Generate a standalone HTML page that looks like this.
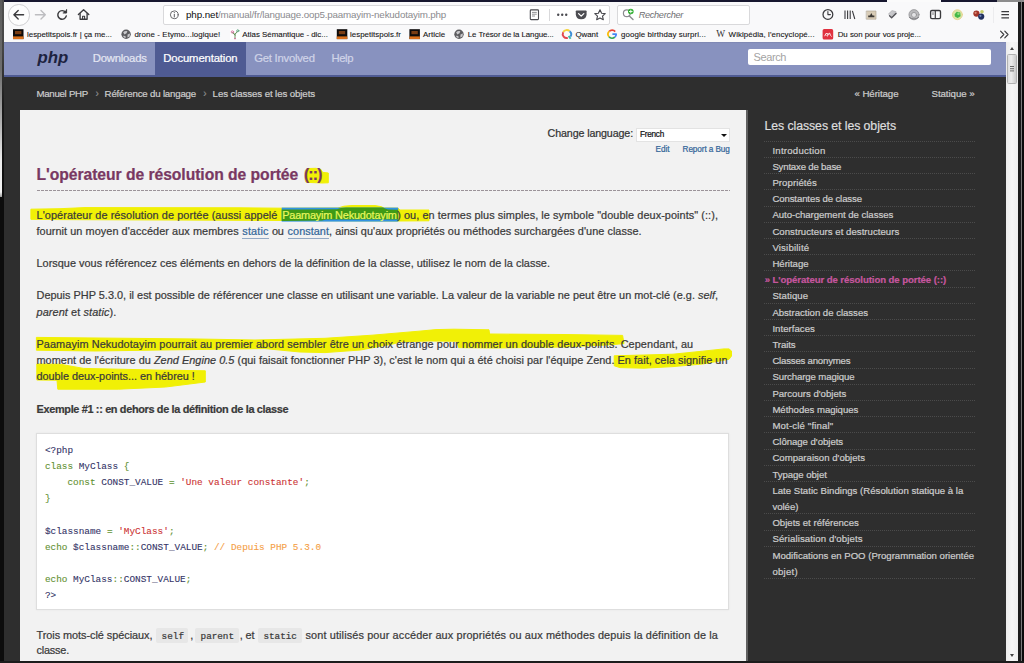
<!DOCTYPE html>
<html lang="fr">
<head>
<meta charset="utf-8">
<title>PHP: L'opérateur de résolution de portée (::) - Manual</title>
<style>
html,body{margin:0;padding:0;}
body{width:1024px;height:663px;overflow:hidden;position:relative;background:#2e2e2e;font-family:"Liberation Sans",sans-serif;}
.a{position:absolute;}
.t{position:absolute;white-space:nowrap;-webkit-text-stroke:0.22px currentColor;}
.sd{position:absolute;left:764px;width:211px;height:0;border-top:1px dotted #4b4b4b;z-index:2;}
svg{position:absolute;overflow:visible;}
</style>
</head>
<body>
<!-- window frame -->
<div class="a" style="left:0;top:0;width:1024px;height:1.6px;background:#17172f;"></div>
<div class="a" style="left:887px;top:0;width:54.2px;height:1.6px;background:#fbfbfb;"></div>
<div class="a" style="left:996.7px;top:0;width:27.3px;height:1.6px;background:#8c8c8c;"></div>
<!-- browser chrome -->
<div class="a" style="left:4.3px;top:1.6px;width:1014px;height:41px;background:#f9f9fa;"></div>
<div class="a" style="left:8.2px;top:4.2px;width:19.4px;height:19.4px;border:1px solid #cfcfd1;border-radius:50%;background:#fdfdfd;"></div>
<div class="a" style="left:163px;top:5.2px;width:445.4px;height:17.4px;border:1px solid #d9d9db;border-radius:2px;background:#fff;"></div>
<div class="a" style="left:617px;top:5.2px;width:131px;height:17.4px;border:1px solid #d9d9db;border-radius:2px;background:#fff;"></div>
<div class="a" style="left:549px;top:9px;width:1px;height:12px;background:#d9d9db;"></div>
<div class="a" style="left:992.5px;top:7px;width:1px;height:16px;background:#ececee;"></div>
<svg width="1024" height="44" viewBox="0 0 1024 44" style="left:0;top:0;z-index:4;" fill="none" stroke-linecap="round" stroke-linejoin="round">
<!-- back / forward -->
<g stroke="#3b3b3e" stroke-width="1.35">
<path d="M14 14.7H23.6M18.2 10.4L13.9 14.7L18.2 19"/>
</g>
<g stroke="#bdbdc0" stroke-width="1.35">
<path d="M35.4 14.7H45.2M41 10.4L45.3 14.7L41 19"/>
</g>
<!-- reload -->
<g stroke="#3b3b3e" stroke-width="1.45">
<path d="M65.6 12.4A4.3 4.3 0 1 0 66.3 15.9"/>
<path d="M66.6 9.6V13H63.2" fill="#3b3b3e" stroke-width="1"/>
</g>
<!-- home -->
<g stroke="#3b3b3e" stroke-width="1.35">
<path d="M78.4 14.6L83.6 9.7L88.8 14.6"/>
<path d="M80.1 13.6V19.2H87.1V13.6"/>
<path d="M82.6 19V16.2H84.6V19" stroke-width="1.1"/>
</g>
<!-- info -->
<circle cx="174.3" cy="14.8" r="3.9" stroke="#5a5a5e" stroke-width="0.9"/>
<path d="M174.3 14.3V17" stroke="#5a5a5e" stroke-width="1"/>
<circle cx="174.3" cy="12.6" r="0.55" fill="#5a5a5e"/>
<!-- reader -->
<rect x="530.3" y="9.9" width="8.2" height="9.7" rx="0.8" stroke="#4a4a4f" stroke-width="1.1"/>
<path d="M532.4 12.4H536.4M532.4 14.2H536.4M532.4 16H534.6" stroke="#77777b" stroke-width="0.8"/>
<!-- dots -->
<g fill="#4a4a4f"><circle cx="558.2" cy="14.7" r="1.2"/><circle cx="562.2" cy="14.7" r="1.2"/><circle cx="566.2" cy="14.7" r="1.2"/></g>
<!-- pocket -->
<path d="M576.6 10.4H585.8Q586.6 10.4 586.6 11.3V14.2Q586.6 19.2 581.2 19.3Q575.8 19.2 575.8 14.2V11.3Q575.8 10.4 576.6 10.4Z" fill="#4d4d52"/>
<path d="M578.6 13.6L581.2 16.1L583.8 13.6" stroke="#fff" stroke-width="1.3"/>
<!-- star -->
<path d="M600 9.8L601.6 13.2L605.2 13.6L602.5 16.1L603.3 19.7L600 17.9L596.7 19.7L597.5 16.1L594.8 13.6L598.4 13.2Z" stroke="#4a4a4f" stroke-width="1.15"/>
<!-- search magnifier -->
<circle cx="626.8" cy="13.3" r="3.4" stroke="#8b8b8f" stroke-width="1.2"/>
<path d="M629.3 15.9L633 19.4" stroke="#8b8b8f" stroke-width="1.4"/>
<circle cx="630.8" cy="11.5" r="2.8" fill="#2fae2f"/>
<path d="M629.4 11.5H632.2M630.8 10.1V12.9" stroke="#fff" stroke-width="0.9"/>
<!-- clock -->
<circle cx="827.9" cy="14.4" r="4.9" stroke="#3b3b3e" stroke-width="1.25"/>
<path d="M827.9 11.6V14.6H830.4" stroke="#3b3b3e" stroke-width="1.1"/>
<!-- library -->
<path d="M845 10.4V19M847.6 10.4V19M850.2 10.4V19M852.4 10.9L854.8 19" stroke="#3b3b3e" stroke-width="1.1" stroke-linecap="butt"/>
<!-- image icon -->
<rect x="866.6" y="11" width="9.4" height="8.2" fill="#d9cdb8" stroke="#a99f8e" stroke-width="0.6"/>
<path d="M868.2 17.2H874.4V15.6L872.6 15.6L871.3 13L870 15.6H868.2Z" fill="#3d3a36"/>
<!-- pen / check -->
<path d="M888.6 13.8L892 10.6L896 11.6L892.2 15.4Z" fill="#c9c9cc" stroke="#9a9a9e" stroke-width="0.5"/>
<path d="M889.6 15.8L891.6 17.8L896 13.4" stroke="#55555a" stroke-width="1.5"/>
<!-- gray gear/globe -->
<circle cx="914" cy="14.7" r="5.1" fill="#b9b9bb" stroke="#8e8e91" stroke-width="0.7"/>
<circle cx="914" cy="14.9" r="2.5" fill="#e3e3e5" stroke="#8a8a8d" stroke-width="0.7"/>
<path d="M909.5 17.6Q914 20.6 918.5 17.6" stroke="#7c7c80" stroke-width="1"/>
<!-- sidebar icon -->
<rect x="930.6" y="10.5" width="9.9" height="8.1" rx="1.3" stroke="#3b3b3e" stroke-width="1.35"/>
<path d="M935.3 10.6V18.5" stroke="#3b3b3e" stroke-width="1.2"/>
<path d="M933 12.6V14.6" stroke="#3b3b3e" stroke-width="0.7"/>
<!-- green icon -->
<circle cx="957.4" cy="14.7" r="5" fill="#dbe7a8" stroke="#e7cf8c" stroke-width="0.8"/>
<path d="M954.6 14.2L956.8 11.8L960.2 12.6L960.6 16.2L957.6 18L954.9 16.6Z" fill="#45b848"/>
<circle cx="958.4" cy="13.8" r="1.2" fill="#8ddc7a"/>
<!-- balls -->
<circle cx="982" cy="11.8" r="1.8" fill="#c9cf6a"/>
<circle cx="976.4" cy="13.6" r="3.1" fill="#a3352a"/>
<circle cx="975.6" cy="12.8" r="1.1" fill="#d88a74"/>
<circle cx="981.2" cy="16.6" r="3.1" fill="#22305f"/>
<circle cx="980.4" cy="15.8" r="1.1" fill="#6f86b8"/>
<!-- hamburger -->
<path d="M1001.4 11.6H1009M1001.4 14.7H1009M1001.4 17.8H1009" stroke="#3b3b3e" stroke-width="1.3" stroke-linecap="butt"/>
<!-- overflow chevrons -->
<path d="M1000.6 31.2L1003.8 34.5L1000.6 37.8M1004.8 31.2L1008 34.5L1004.8 37.8" stroke="#3b3b3e" stroke-width="1.2"/>

<!-- bookmark favicons -->
<g>
<rect x="13" y="29.2" width="10.5" height="9.9" fill="#0d0b0a"/><rect x="13" y="36.4" width="10.5" height="2.7" fill="#d96f1a"/><rect x="15" y="31" width="6.4" height="3.2" fill="#7a3d12"/>
<rect x="336.8" y="29.2" width="10.5" height="9.9" fill="#0d0b0a"/><rect x="336.8" y="36.4" width="10.5" height="2.7" fill="#d96f1a"/><rect x="338.8" y="31" width="6.4" height="3.2" fill="#7a3d12"/>
<rect x="409.4" y="29.2" width="10.5" height="9.9" fill="#0d0b0a"/><rect x="409.4" y="36.4" width="10.5" height="2.7" fill="#d96f1a"/><rect x="411.4" y="31" width="6.4" height="3.2" fill="#7a3d12"/>
</g>
<!-- globes -->
<g>
<circle cx="126.1" cy="34.3" r="4.7" fill="#5d5d60"/>
<path d="M123.2 32.2Q125 30.6 127.4 31.2L126.6 33.2L124.4 34.6Z M127.6 34.4L130 33.6L129.6 36.6L127.4 37.6Z M123 35.8L125.4 36L125.8 38L123.8 37.4Z" fill="#c9c9cc"/>
<circle cx="459" cy="34.3" r="4.7" fill="#5d5d60"/>
<path d="M456.1 32.2Q457.9 30.6 460.3 31.2L459.5 33.2L457.3 34.6Z M460.5 34.4L462.9 33.6L462.5 36.6L460.3 37.6Z M455.9 35.8L458.3 36L458.7 38L456.7 37.4Z" fill="#c9c9cc"/>
</g>
<!-- atlas icon -->
<rect x="230" y="29.4" width="10" height="10" fill="#fff"/>
<path d="M235 38.6V33.6M235 35.2L232.6 32.4M235 34.4L237.6 31" stroke="#5b8a4e" stroke-width="0.9"/>
<circle cx="232.4" cy="32" r="1.2" stroke="#d66a9a" stroke-width="0.8"/>
<circle cx="237.8" cy="30.8" r="1.1" stroke="#58a07a" stroke-width="0.8"/>
<circle cx="235" cy="38.6" r="0.8" fill="#d66a9a"/>
<!-- qwant -->
<g stroke-width="1.9" stroke-linecap="butt">
<path d="M563.2 32.2A4 4 0 0 1 569.6 31.2" stroke="#f4d33c"/>
<path d="M569.6 31.2A4 4 0 0 1 570.4 36.6" stroke="#3d8fd6"/>
<path d="M567.8 37.9A4 4 0 0 1 563.2 32.2" stroke="#e2474e"/>
<path d="M568.6 36L570.6 38.8" stroke="#39b6a5"/>
</g>
<!-- google G -->
<g stroke-width="1.7" stroke-linecap="butt">
<path d="M615.2 31.6A4 4 0 0 0 609.2 31.4" stroke="#e94335"/>
<path d="M609.2 31.4A4 4 0 0 0 609 36.8" stroke="#fbbc05"/>
<path d="M609 36.8A4 4 0 0 0 614.8 37.2" stroke="#34a853"/>
<path d="M614.8 37.2A4 4 0 0 0 616.2 34.2H612.4" stroke="#4285f4"/>
</g>
<!-- red favicon -->
<rect x="822.6" y="29.1" width="10.6" height="10.4" rx="1.6" fill="#e0313f"/>
<path d="M824.8 35.8Q825.6 32.2 827.6 33.6Q829.4 35.2 827.4 36Q825.8 36.4 828.8 33.4Q830.2 32.4 830.2 35L831.4 36.2" stroke="#fff" stroke-width="0.9"/>
</svg>

<!-- php navbar -->
<div class="a" style="left:4px;top:42.3px;width:1002.2px;height:32.3px;background:linear-gradient(180deg,#7c85b0 0,#8892bf 1.6px);border-bottom:2.8px solid #4f5b93;"></div>
<div class="a" style="left:155px;top:42.3px;width:90.6px;height:35.1px;background:#4f5b93;"></div>
<div class="a" style="left:748px;top:49px;width:243px;height:16px;background:#fff;border-radius:2px;"></div>
<!-- layout -->
<div class="a" style="left:19.6px;top:109.7px;width:726.1px;height:551.3px;background:#f2f2f2;border-right:2px solid #606060;"></div>
<div class="a" style="left:636px;top:128.4px;width:91.7px;height:11.5px;background:#fff;border:1px solid #e3e3e3;"></div>
<div class="a" style="left:720.5px;top:133.6px;width:0;height:0;border-left:3px solid transparent;border-right:3px solid transparent;border-top:3.2px solid #111;"></div>
<div class="a" style="left:36.5px;top:189.8px;width:693.2px;height:1px;background:repeating-linear-gradient(90deg,#9b9399 0,#9b9399 2.8px,rgba(0,0,0,0) 2.8px,rgba(0,0,0,0) 4px);z-index:2;"></div>
<div class="a" style="left:36.1px;top:432.9px;width:690.6px;height:175px;background:#fff;border:1px solid #dedede;box-shadow:0 0 2px rgba(0,0,0,0.06);"></div>
<div class="a" style="left:156.4px;top:628.3px;width:32px;height:14.5px;background:#e7e7e7;border-radius:2px;"></div>
<div class="a" style="left:195.4px;top:628.3px;width:43.3px;height:14.5px;background:#e7e7e7;border-radius:2px;"></div>
<div class="a" style="left:258.4px;top:628.3px;width:43.5px;height:14.5px;background:#e7e7e7;border-radius:2px;"></div>
<!--HILITE-START-->
<svg width="1024" height="663" viewBox="0 0 1024 663" style="left:0;top:0;z-index:1;">
<polygon points="305.2,170.5 308.0,168.5 316.0,168.3 321.0,169.5 322.5,172.3 328.3,173.0 328.3,182.8 322.0,183.0 306.0,182.3 305.2,180.0" fill="#f1f006" stroke="#f1f006" stroke-width="1" stroke-linejoin="round" />
<polygon points="30.9,209.2 60.0,208.7 85.0,207.6 240.0,207.8 281.7,208.2 338.0,208.0 344.0,206.2 352.0,205.5 375.0,205.6 381.0,206.6 384.0,208.0 398.0,208.2 400.0,210.0 429.0,210.0 429.0,220.8 398.0,221.0 240.0,220.3 60.0,219.6 30.9,219.3" fill="#f1f006" stroke="#f1f006" stroke-width="1" stroke-linejoin="round" />
<rect x="281.7" y="207.6" width="116.5" height="14" fill="#3393e2"/>
<polygon points="281.7,209.5 300.0,209.4 337.0,209.3 341.0,208.0 346.0,207.5 383.0,207.5 385.0,208.4 388.0,209.6 398.2,209.8 398.2,219.5 326.0,219.4 322.0,220.6 281.7,221.0" fill="#3f9a16"/>
<polygon points="36.4,337.4 198.0,339.0 255.0,340.0 325.0,338.3 372.0,335.2 419.0,331.2 436.0,329.6 454.0,329.2 489.0,329.8 489.6,334.0 564.0,334.5 622.6,335.4 624.0,343.6 611.0,344.8 564.0,347.0 493.7,348.0 458.6,347.6 457.0,341.3 430.0,341.0 400.0,341.8 395.6,343.4 360.5,350.0 325.0,352.6 300.0,352.0 265.0,348.6 189.0,349.6 95.0,351.0 36.4,350.2" fill="#f1f006" stroke="#f1f006" stroke-width="1" stroke-linejoin="round" />
<polygon points="614.2,355.8 644.0,355.0 673.0,354.2 702.5,351.2 724.0,348.9 729.0,348.9 731.5,351.0 731.5,356.0 729.0,359.3 702.5,364.0 673.0,366.6 644.0,368.2 620.0,367.6 614.2,365.8" fill="#f1f006" stroke="#f1f006" stroke-width="1" stroke-linejoin="round" />
<polygon points="36.8,364.0 60.0,364.2 83.6,368.4 154.0,370.0 205.3,370.8 205.3,382.0 165.6,387.0 118.7,389.2 57.8,389.2 57.0,380.2 36.8,380.0" fill="#f1f006" stroke="#f1f006" stroke-width="1" stroke-linejoin="round" />
</svg>
<!--HILITE-END-->
<!-- scrollbar + frame -->
<div class="a" style="left:1006.2px;top:42.3px;width:12px;height:618.7px;background:linear-gradient(90deg,#ececec,#f7f7f7 50%,#efefef);"></div>
<div class="a" style="left:1007.4px;top:54px;width:9.3px;height:30.3px;background:linear-gradient(90deg,#dedede,#ededed 40%,#cbcbcb);border:1px solid #b2b2b2;box-sizing:border-box;border-radius:1.5px;"></div>
<div class="a" style="left:1009.8px;top:66.3px;width:4.2px;height:1px;background:#6a6a6a;box-shadow:0 2.2px 0 #6a6a6a,0 4.4px 0 #6a6a6a;"></div>
<div class="a" style="left:1010px;top:47px;width:0;height:0;border-left:2.5px solid transparent;border-right:2.5px solid transparent;border-bottom:3px solid #444;"></div>
<div class="a" style="left:1010px;top:654.3px;width:0;height:0;border-left:2.5px solid transparent;border-right:2.5px solid transparent;border-top:3px solid #444;"></div>
<div class="a" style="left:0;top:0;width:4.3px;height:663px;background:linear-gradient(180deg,#4e4e4e 0,#454545 50px,#1a1a1a 105px,#0c0c0c 200px,#0c0c0c 100%);"></div>
<div class="a" style="left:0;top:0;width:1.6px;height:197px;background:linear-gradient(180deg,#5a5a5a 0,#6e6e6e 70px,#b5b5b5 125px,#ececec 160px,#f2f2f2 192px,#999 197px);"></div>
<div class="a" style="left:1018.2px;top:2px;width:5.8px;height:661px;background:linear-gradient(90deg,#1c1c1c 0,#1c1c1c 2.6px,#7a7a7a 2.9px,#7a7a7a 3.7px,#0a0a0a 4px,#0a0a0a 100%);"></div>
<div class="a" style="left:0;top:661px;width:1024px;height:2px;background:#1c1c1c;"></div>
<div class="sd" style="top:140.8px"></div>
<div class="sd" style="top:157.0px"></div>
<div class="sd" style="top:173.2px"></div>
<div class="sd" style="top:189.4px"></div>
<div class="sd" style="top:205.6px"></div>
<div class="sd" style="top:221.8px"></div>
<div class="sd" style="top:238.0px"></div>
<div class="sd" style="top:254.2px"></div>
<div class="sd" style="top:270.4px"></div>
<div class="sd" style="top:286.6px"></div>
<div class="sd" style="top:302.8px"></div>
<div class="sd" style="top:319.0px"></div>
<div class="sd" style="top:335.2px"></div>
<div class="sd" style="top:351.4px"></div>
<div class="sd" style="top:367.6px"></div>
<div class="sd" style="top:383.8px"></div>
<div class="sd" style="top:400.0px"></div>
<div class="sd" style="top:416.2px"></div>
<div class="sd" style="top:432.4px"></div>
<div class="sd" style="top:448.6px"></div>
<div class="sd" style="top:464.8px"></div>
<div class="sd" style="top:481.0px"></div>
<div class="sd" style="top:513.4px"></div>
<div class="sd" style="top:529.6px"></div>
<div class="sd" style="top:545.8px"></div>
<div class="sd" style="top:578.2px"></div>
<div class="t" id="t0" style='left:186.00px;top:9.23px;font:normal normal 9.80px/12.74px "Liberation Sans", sans-serif;color:#0c0c0d;z-index:3;letter-spacing:-0.098px;-webkit-text-stroke:0;'>php.net</div>
<div class="t" id="t1" style='left:218.00px;top:9.23px;font:normal normal 9.80px/12.74px "Liberation Sans", sans-serif;color:#8a8a8e;z-index:3;letter-spacing:-0.182px;-webkit-text-stroke:0;'>/manual/fr/language.oop5.paamayim-nekudotayim.php</div>
<div class="t" id="t2" style='left:638.70px;top:10.02px;font:italic normal 9.20px/11.96px "Liberation Sans", sans-serif;color:#6f6f73;z-index:3;letter-spacing:-0.320px;-webkit-text-stroke:0;'>Rechercher</div>
<div class="t" id="t3" style='left:716.20px;top:28.19px;font:normal normal 9.40px/12.22px "Liberation Serif", serif;color:#333;z-index:3;letter-spacing:-0.259px;-webkit-text-stroke:0;'>W</div>
<div class="t" id="t4" style='left:27.00px;top:29.66px;font:normal normal 7.90px/10.27px "Liberation Sans", sans-serif;color:#151515;z-index:3;letter-spacing:0.002px;-webkit-text-stroke:0.1px;'>lespetitspois.fr | ça me...</div>
<div class="t" id="t5" style='left:134.40px;top:29.66px;font:normal normal 7.90px/10.27px "Liberation Sans", sans-serif;color:#151515;z-index:3;letter-spacing:0.088px;-webkit-text-stroke:0.1px;'>drone - Etymo...logique!</div>
<div class="t" id="t6" style='left:242.30px;top:29.66px;font:normal normal 7.90px/10.27px "Liberation Sans", sans-serif;color:#151515;z-index:3;letter-spacing:0.003px;-webkit-text-stroke:0.1px;'>Atlas Sémantique - dic...</div>
<div class="t" id="t7" style='left:350.00px;top:29.66px;font:normal normal 7.90px/10.27px "Liberation Sans", sans-serif;color:#151515;z-index:3;letter-spacing:0.035px;-webkit-text-stroke:0.1px;'>lespetitspois.fr</div>
<div class="t" id="t8" style='left:423.00px;top:29.66px;font:normal normal 7.90px/10.27px "Liberation Sans", sans-serif;color:#151515;z-index:3;letter-spacing:0.052px;-webkit-text-stroke:0.1px;'>Article</div>
<div class="t" id="t9" style='left:467.80px;top:29.66px;font:normal normal 7.90px/10.27px "Liberation Sans", sans-serif;color:#151515;z-index:3;letter-spacing:-0.073px;-webkit-text-stroke:0.1px;'>Le Trésor de la Langue...</div>
<div class="t" id="t10" style='left:575.40px;top:29.66px;font:normal normal 7.90px/10.27px "Liberation Sans", sans-serif;color:#151515;z-index:3;letter-spacing:-0.002px;-webkit-text-stroke:0.1px;'>Qwant</div>
<div class="t" id="t11" style='left:621.00px;top:29.66px;font:normal normal 7.90px/10.27px "Liberation Sans", sans-serif;color:#151515;z-index:3;letter-spacing:0.101px;-webkit-text-stroke:0.1px;'>google birthday surpri...</div>
<div class="t" id="t12" style='left:728.60px;top:29.66px;font:normal normal 7.90px/10.27px "Liberation Sans", sans-serif;color:#151515;z-index:3;letter-spacing:0.085px;-webkit-text-stroke:0.1px;'>Wikipédia, l'encyclopé...</div>
<div class="t" id="t13" style='left:837.70px;top:29.66px;font:normal normal 7.90px/10.27px "Liberation Sans", sans-serif;color:#151515;z-index:3;letter-spacing:-0.020px;-webkit-text-stroke:0.1px;'>Du son pour vos proje...</div>
<div class="t" id="t14" style='left:37.40px;top:47.18px;font:italic bold 16.80px/21.84px "Liberation Sans", sans-serif;color:#1d2340;z-index:3;letter-spacing:0.078px;-webkit-text-stroke:0;'>php</div>
<div class="t" id="t15" style='left:92.80px;top:50.95px;font:normal normal 11.30px/14.69px "Liberation Sans", sans-serif;color:#e4e6f2;z-index:3;letter-spacing:-0.232px;'>Downloads</div>
<div class="t" id="t16" style='left:163.30px;top:50.95px;font:normal normal 11.30px/14.69px "Liberation Sans", sans-serif;color:#ffffff;z-index:3;letter-spacing:-0.137px;'>Documentation</div>
<div class="t" id="t17" style='left:254.20px;top:50.95px;font:normal normal 11.30px/14.69px "Liberation Sans", sans-serif;color:#d0d4e8;z-index:3;letter-spacing:-0.245px;'>Get Involved</div>
<div class="t" id="t18" style='left:331.40px;top:50.95px;font:normal normal 11.30px/14.69px "Liberation Sans", sans-serif;color:#d0d4e8;z-index:3;letter-spacing:-0.359px;'>Help</div>
<div class="t" id="t19" style='left:753.50px;top:49.65px;font:normal normal 11.00px/14.30px "Liberation Sans", sans-serif;color:#a3a3a3;z-index:3;letter-spacing:-0.393px;-webkit-text-stroke:0;'>Search</div>
<div class="t" id="t20" style='left:36.40px;top:87.79px;font:normal normal 9.70px/12.61px "Liberation Sans", sans-serif;color:#cccccc;z-index:3;letter-spacing:-0.279px;'>Manuel PHP</div>
<div class="t" id="t21" style='left:95.50px;top:86.87px;font:normal normal 10.20px/13.26px "Liberation Sans", sans-serif;color:#8a8a8a;z-index:3;'>›</div>
<div class="t" id="t22" style='left:104.60px;top:87.79px;font:normal normal 9.70px/12.61px "Liberation Sans", sans-serif;color:#cccccc;z-index:3;letter-spacing:-0.197px;'>Référence du langage</div>
<div class="t" id="t23" style='left:203.30px;top:86.87px;font:normal normal 10.20px/13.26px "Liberation Sans", sans-serif;color:#8a8a8a;z-index:3;'>›</div>
<div class="t" id="t24" style='left:212.60px;top:87.79px;font:normal normal 9.70px/12.61px "Liberation Sans", sans-serif;color:#cccccc;z-index:3;letter-spacing:-0.105px;'>Les classes et les objets</div>
<div class="t" id="t25" style='left:854.50px;top:87.79px;font:normal normal 9.70px/12.61px "Liberation Sans", sans-serif;color:#cccccc;z-index:3;letter-spacing:-0.070px;'>« Héritage</div>
<div class="t" id="t26" style='left:931.50px;top:87.79px;font:normal normal 9.70px/12.61px "Liberation Sans", sans-serif;color:#cccccc;z-index:3;letter-spacing:-0.064px;'>Statique »</div>
<div class="t" id="t27" style='left:547.60px;top:127.24px;font:normal normal 10.70px/13.91px "Liberation Sans", sans-serif;color:#333;z-index:3;letter-spacing:-0.122px;'>Change language:</div>
<div class="t" id="t28" style='left:640.00px;top:129.97px;font:normal normal 8.20px/10.66px "Liberation Sans", sans-serif;color:#111;z-index:3;letter-spacing:-0.247px;'>French</div>
<div class="t" id="t29" style='left:655.60px;top:145.17px;font:normal normal 8.20px/10.66px "Liberation Sans", sans-serif;color:#336699;z-index:3;letter-spacing:-0.077px;'>Edit</div>
<div class="t" id="t30" style='left:682.60px;top:145.17px;font:normal normal 8.20px/10.66px "Liberation Sans", sans-serif;color:#336699;z-index:3;letter-spacing:-0.096px;'>Report a Bug</div>
<div class="t" id="t31" style='left:36.50px;top:164.69px;font:normal bold 15.70px/20.41px "Liberation Sans", sans-serif;color:#793862;z-index:3;letter-spacing:-0.051px;'>L'opérateur de résolution de portée</div>
<div class="t" id="t32" style='left:303.90px;top:164.69px;font:normal bold 15.70px/20.41px "Liberation Sans", sans-serif;color:#793862;z-index:3;letter-spacing:-0.802px;'>(::)</div>
<div class="t" id="t33" style='left:36.50px;top:207.91px;font:normal normal 10.90px/14.17px "Liberation Sans", sans-serif;color:#3a3a3a;z-index:3;letter-spacing:0.082px;'>L'opérateur de résolution de portée (aussi appelé</div>
<div class="t" id="t34" style='left:282.20px;top:207.91px;font:normal normal 10.90px/14.17px "Liberation Sans", sans-serif;color:#e8f75e;z-index:3;letter-spacing:-0.172px;'>Paamayim Nekudotayim</div>
<div class="t" id="t35" style='left:397.20px;top:207.91px;font:normal normal 10.90px/14.17px "Liberation Sans", sans-serif;color:#3a3a3a;z-index:3;letter-spacing:0.065px;'>) ou, en termes plus simples, le symbole "double deux-points" (::),</div>
<div class="t" id="t36" style='left:36.50px;top:223.91px;font:normal normal 10.90px/14.17px "Liberation Sans", sans-serif;color:#3a3a3a;z-index:3;letter-spacing:0.057px;'>fournit un moyen d'accéder aux membres</div>
<div class="t" id="t37" style='left:242.30px;top:223.91px;font:normal normal 10.90px/14.17px "Liberation Sans", sans-serif;color:#336699;z-index:3;letter-spacing:0.146px;border-bottom:1px solid #93a9c4;'>static</div>
<div class="t" id="t38" style='left:272.10px;top:223.91px;font:normal normal 10.90px/14.17px "Liberation Sans", sans-serif;color:#3a3a3a;z-index:3;letter-spacing:-0.413px;'>ou</div>
<div class="t" id="t39" style='left:287.60px;top:223.91px;font:normal normal 10.90px/14.17px "Liberation Sans", sans-serif;color:#336699;z-index:3;letter-spacing:0.029px;border-bottom:1px solid #93a9c4;'>constant</div>
<div class="t" id="t40" style='left:329.00px;top:223.91px;font:normal normal 10.90px/14.17px "Liberation Sans", sans-serif;color:#3a3a3a;z-index:3;letter-spacing:0.043px;'>, ainsi qu'aux propriétés ou méthodes surchargées d'une classe.</div>
<div class="t" id="t41" style='left:36.50px;top:256.22px;font:normal normal 10.90px/14.17px "Liberation Sans", sans-serif;color:#3a3a3a;z-index:3;letter-spacing:0.024px;'>Lorsque vous référencez ces éléments en dehors de la définition de la classe, utilisez le nom de la classe.</div>
<div class="t" id="t42" style='left:36.50px;top:288.42px;font:normal normal 10.90px/14.17px "Liberation Sans", sans-serif;color:#3a3a3a;z-index:3;letter-spacing:0.013px;'>Depuis PHP 5.3.0, il est possible de référencer une classe en utilisant une variable. La valeur de la variable ne peut être un mot-clé (e.g. <i>self</i>,</div>
<div class="t" id="t43" style='left:36.50px;top:304.52px;font:normal normal 10.90px/14.17px "Liberation Sans", sans-serif;color:#3a3a3a;z-index:3;letter-spacing:0.094px;'><i>parent</i> et <i>static</i>).</div>
<div class="t" id="t44" style='left:36.50px;top:337.02px;font:normal normal 10.90px/14.17px "Liberation Sans", sans-serif;color:#3a3a3a;z-index:3;letter-spacing:0.081px;'>Paamayim Nekudotayim pourrait au premier abord sembler être un choix étrange pour nommer un double deux-points. Cependant, au</div>
<div class="t" id="t45" style='left:36.50px;top:353.12px;font:normal normal 10.90px/14.17px "Liberation Sans", sans-serif;color:#3a3a3a;z-index:3;letter-spacing:0.039px;'>moment de l'écriture du <i>Zend Engine 0.5</i> (qui faisait fonctionner PHP 3), c'est le nom qui a été choisi par l'équipe Zend. En fait, cela signifie un</div>
<div class="t" id="t46" style='left:36.50px;top:369.12px;font:normal normal 10.90px/14.17px "Liberation Sans", sans-serif;color:#3a3a3a;z-index:3;letter-spacing:-0.029px;'>double deux-points... en hébreu !</div>
<div class="t" id="t47" style='left:36.60px;top:401.72px;font:normal bold 10.90px/14.17px "Liberation Sans", sans-serif;color:#3a3a3a;z-index:3;letter-spacing:-0.335px;'>Exemple #1 :: en dehors de la définition de la classe</div>
<div class="t" id="t48" style='left:44.90px;top:444.89px;font:normal normal 9.40px/12.22px "Liberation Mono", monospace;color:#333366;z-index:3;letter-spacing:0.008px;white-space:pre;-webkit-text-stroke:0.1px;'><span style="color:#333366">&lt;?php</span></div>
<div class="t" id="t49" style='left:44.90px;top:461.02px;font:normal normal 9.40px/12.22px "Liberation Mono", monospace;color:#333366;z-index:3;letter-spacing:0.008px;white-space:pre;-webkit-text-stroke:0.1px;'><span style="color:#5f9030">class </span><span style="color:#333366">MyClass </span><span style="color:#5f9030">{</span></div>
<div class="t" id="t50" style='left:44.90px;top:477.15px;font:normal normal 9.40px/12.22px "Liberation Mono", monospace;color:#333366;z-index:3;letter-spacing:0.009px;white-space:pre;-webkit-text-stroke:0.1px;'><span style="color:#5f9030">    const </span><span style="color:#333366">CONST_VALUE </span><span style="color:#5f9030">= </span><span style="color:#cc3333">'Une valeur constante'</span><span style="color:#5f9030">;</span></div>
<div class="t" id="t51" style='left:44.90px;top:493.28px;font:normal normal 9.40px/12.22px "Liberation Mono", monospace;color:#333366;z-index:3;letter-spacing:-0.005px;white-space:pre;-webkit-text-stroke:0.1px;'><span style="color:#5f9030">}</span></div>
<div class="t" id="t52" style='left:44.90px;top:525.54px;font:normal normal 9.40px/12.22px "Liberation Mono", monospace;color:#333366;z-index:3;letter-spacing:0.008px;white-space:pre;-webkit-text-stroke:0.1px;'><span style="color:#333366">$classname </span><span style="color:#5f9030">= </span><span style="color:#cc3333">'MyClass'</span><span style="color:#5f9030">;</span></div>
<div class="t" id="t53" style='left:44.90px;top:541.67px;font:normal normal 9.40px/12.22px "Liberation Mono", monospace;color:#333366;z-index:3;letter-spacing:0.009px;white-space:pre;-webkit-text-stroke:0.1px;'><span style="color:#5f9030">echo </span><span style="color:#333366">$classname</span><span style="color:#5f9030">::</span><span style="color:#333366">CONST_VALUE</span><span style="color:#5f9030">; </span><span style="color:#f59e45">// Depuis PHP 5.3.0</span></div>
<div class="t" id="t54" style='left:44.90px;top:573.93px;font:normal normal 9.40px/12.22px "Liberation Mono", monospace;color:#333366;z-index:3;letter-spacing:0.008px;white-space:pre;-webkit-text-stroke:0.1px;'><span style="color:#5f9030">echo </span><span style="color:#333366">MyClass</span><span style="color:#5f9030">::</span><span style="color:#333366">CONST_VALUE</span><span style="color:#5f9030">;</span></div>
<div class="t" id="t55" style='left:44.90px;top:590.06px;font:normal normal 9.40px/12.22px "Liberation Mono", monospace;color:#333366;z-index:3;letter-spacing:0.003px;white-space:pre;-webkit-text-stroke:0.1px;'><span style="color:#333366">?&gt;</span></div>
<div class="t" id="t56" style='left:36.50px;top:627.62px;font:normal normal 10.90px/14.17px "Liberation Sans", sans-serif;color:#3a3a3a;z-index:3;letter-spacing:-0.042px;'>Trois mots-clé spéciaux,</div>
<div class="t" id="t57" style='left:161.60px;top:630.56px;font:normal normal 9.30px/12.09px "Liberation Mono", monospace;color:#3a3a3a;z-index:3;letter-spacing:0.018px;'>self</div>
<div class="t" id="t58" style='left:190.30px;top:627.62px;font:normal normal 10.90px/14.17px "Liberation Sans", sans-serif;color:#3a3a3a;z-index:3;'>,</div>
<div class="t" id="t59" style='left:200.60px;top:630.56px;font:normal normal 9.30px/12.09px "Liberation Mono", monospace;color:#3a3a3a;z-index:3;letter-spacing:-0.014px;'>parent</div>
<div class="t" id="t60" style='left:239.80px;top:627.62px;font:normal normal 10.90px/14.17px "Liberation Sans", sans-serif;color:#3a3a3a;z-index:3;letter-spacing:-0.160px;'>, et</div>
<div class="t" id="t61" style='left:263.40px;top:630.56px;font:normal normal 9.30px/12.09px "Liberation Mono", monospace;color:#3a3a3a;z-index:3;letter-spacing:0.003px;'>static</div>
<div class="t" id="t62" style='left:305.50px;top:627.62px;font:normal normal 10.90px/14.17px "Liberation Sans", sans-serif;color:#3a3a3a;z-index:3;letter-spacing:0.125px;'>sont utilisés pour accéder aux propriétés ou aux méthodes depuis la définition de la</div>
<div class="t" id="t63" style='left:36.50px;top:643.31px;font:normal normal 10.90px/14.17px "Liberation Sans", sans-serif;color:#3a3a3a;z-index:3;letter-spacing:-0.201px;'>classe.</div>
<div class="t" id="t64" style='left:764.50px;top:118.91px;font:normal normal 12.30px/15.99px "Liberation Sans", sans-serif;color:#dddddd;z-index:3;letter-spacing:-0.072px;'>Les classes et les objets</div>
<div class="t" id="t65" style='left:772.40px;top:144.56px;font:normal normal 9.60px/12.48px "Liberation Sans", sans-serif;color:#cccccc;z-index:3;letter-spacing:0.247px;'>Introduction</div>
<div class="t" id="t66" style='left:772.40px;top:160.76px;font:normal normal 9.60px/12.48px "Liberation Sans", sans-serif;color:#cccccc;z-index:3;letter-spacing:-0.179px;'>Syntaxe de base</div>
<div class="t" id="t67" style='left:772.40px;top:176.96px;font:normal normal 9.60px/12.48px "Liberation Sans", sans-serif;color:#cccccc;z-index:3;letter-spacing:0.067px;'>Propriétés</div>
<div class="t" id="t68" style='left:772.40px;top:193.16px;font:normal normal 9.60px/12.48px "Liberation Sans", sans-serif;color:#cccccc;z-index:3;letter-spacing:-0.107px;'>Constantes de classe</div>
<div class="t" id="t69" style='left:772.40px;top:209.36px;font:normal normal 9.60px/12.48px "Liberation Sans", sans-serif;color:#cccccc;z-index:3;letter-spacing:-0.027px;'>Auto-chargement de classes</div>
<div class="t" id="t70" style='left:772.40px;top:225.56px;font:normal normal 9.60px/12.48px "Liberation Sans", sans-serif;color:#cccccc;z-index:3;letter-spacing:0.036px;'>Constructeurs et destructeurs</div>
<div class="t" id="t71" style='left:772.40px;top:241.76px;font:normal normal 9.60px/12.48px "Liberation Sans", sans-serif;color:#cccccc;z-index:3;letter-spacing:0.187px;'>Visibilité</div>
<div class="t" id="t72" style='left:772.40px;top:257.96px;font:normal normal 9.60px/12.48px "Liberation Sans", sans-serif;color:#cccccc;z-index:3;letter-spacing:-0.008px;'>Héritage</div>
<div class="t" id="t73" style='left:764.70px;top:274.16px;font:normal bold 9.60px/12.48px "Liberation Sans", sans-serif;color:#c6569e;z-index:3;letter-spacing:-0.074px;'>» L'opérateur de résolution de portée (::)</div>
<div class="t" id="t74" style='left:772.40px;top:290.36px;font:normal normal 9.60px/12.48px "Liberation Sans", sans-serif;color:#cccccc;z-index:3;letter-spacing:0.060px;'>Statique</div>
<div class="t" id="t75" style='left:772.40px;top:306.56px;font:normal normal 9.60px/12.48px "Liberation Sans", sans-serif;color:#cccccc;z-index:3;letter-spacing:-0.017px;'>Abstraction de classes</div>
<div class="t" id="t76" style='left:772.40px;top:322.76px;font:normal normal 9.60px/12.48px "Liberation Sans", sans-serif;color:#cccccc;z-index:3;letter-spacing:0.036px;'>Interfaces</div>
<div class="t" id="t77" style='left:772.40px;top:338.96px;font:normal normal 9.60px/12.48px "Liberation Sans", sans-serif;color:#cccccc;z-index:3;letter-spacing:-0.090px;'>Traits</div>
<div class="t" id="t78" style='left:772.40px;top:355.16px;font:normal normal 9.60px/12.48px "Liberation Sans", sans-serif;color:#cccccc;z-index:3;letter-spacing:-0.198px;'>Classes anonymes</div>
<div class="t" id="t79" style='left:772.40px;top:371.36px;font:normal normal 9.60px/12.48px "Liberation Sans", sans-serif;color:#cccccc;z-index:3;letter-spacing:-0.102px;'>Surcharge magique</div>
<div class="t" id="t80" style='left:772.40px;top:387.56px;font:normal normal 9.60px/12.48px "Liberation Sans", sans-serif;color:#cccccc;z-index:3;letter-spacing:-0.002px;'>Parcours d'objets</div>
<div class="t" id="t81" style='left:772.40px;top:403.76px;font:normal normal 9.60px/12.48px "Liberation Sans", sans-serif;color:#cccccc;z-index:3;letter-spacing:-0.030px;'>Méthodes magiques</div>
<div class="t" id="t82" style='left:772.40px;top:419.96px;font:normal normal 9.60px/12.48px "Liberation Sans", sans-serif;color:#cccccc;z-index:3;letter-spacing:0.165px;'>Mot-clé "final"</div>
<div class="t" id="t83" style='left:772.40px;top:436.16px;font:normal normal 9.60px/12.48px "Liberation Sans", sans-serif;color:#cccccc;z-index:3;letter-spacing:-0.029px;'>Clônage d'objets</div>
<div class="t" id="t84" style='left:772.40px;top:452.36px;font:normal normal 9.60px/12.48px "Liberation Sans", sans-serif;color:#cccccc;z-index:3;letter-spacing:0.010px;'>Comparaison d'objets</div>
<div class="t" id="t85" style='left:772.40px;top:468.56px;font:normal normal 9.60px/12.48px "Liberation Sans", sans-serif;color:#cccccc;z-index:3;letter-spacing:-0.038px;'>Typage objet</div>
<div class="t" id="t86" style='left:772.40px;top:484.76px;font:normal normal 9.60px/12.48px "Liberation Sans", sans-serif;color:#cccccc;z-index:3;letter-spacing:0.011px;'>Late Static Bindings (Résolution statique à la</div>
<div class="t" id="t87" style='left:772.40px;top:500.96px;font:normal normal 9.60px/12.48px "Liberation Sans", sans-serif;color:#cccccc;z-index:3;letter-spacing:-0.023px;'>volée)</div>
<div class="t" id="t88" style='left:772.40px;top:517.16px;font:normal normal 9.60px/12.48px "Liberation Sans", sans-serif;color:#cccccc;z-index:3;letter-spacing:0.000px;'>Objets et références</div>
<div class="t" id="t89" style='left:772.40px;top:533.36px;font:normal normal 9.60px/12.48px "Liberation Sans", sans-serif;color:#cccccc;z-index:3;letter-spacing:0.118px;'>Sérialisation d'objets</div>
<div class="t" id="t90" style='left:772.40px;top:549.56px;font:normal normal 9.60px/12.48px "Liberation Sans", sans-serif;color:#cccccc;z-index:3;letter-spacing:-0.007px;'>Modifications en POO (Programmation orientée</div>
<div class="t" id="t91" style='left:772.40px;top:565.76px;font:normal normal 9.60px/12.48px "Liberation Sans", sans-serif;color:#cccccc;z-index:3;letter-spacing:0.267px;'>objet)</div>
</body>
</html>
